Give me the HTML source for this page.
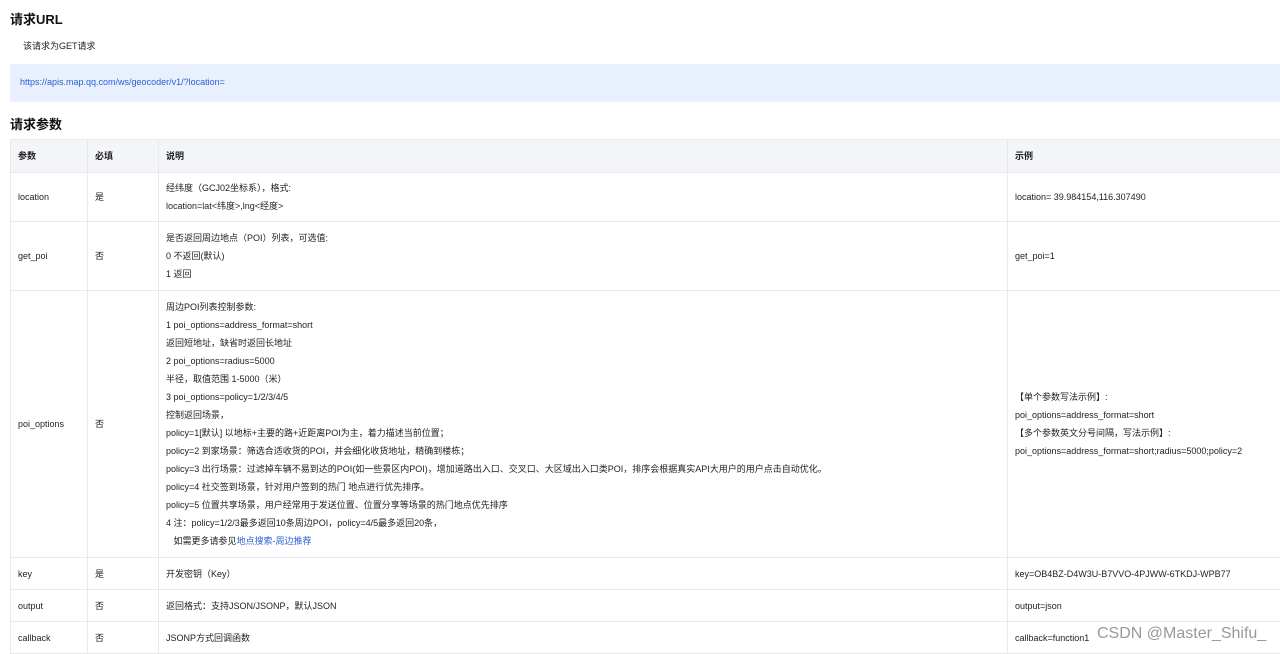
<!DOCTYPE html>
<html><head><meta charset="utf-8"><style>
*{margin:0;padding:0;box-sizing:border-box}
body{width:1280px;height:653px;overflow:hidden;background:#fff;font-family:"Liberation Sans","Noto Sans CJK SC",sans-serif;color:#222;font-size:9px;position:relative}
.h{position:absolute;left:10px;font-size:13px;font-weight:bold;color:#111}
.p{position:absolute;left:23px;top:39px;font-size:9px}
.box{position:absolute;left:10px;top:64px;width:1270px;height:38px;background:#e9f0fd}
.box a{position:absolute;left:10px;top:13px;color:#2a5fd6;text-decoration:none;font-size:9px}
table{position:absolute;left:10px;top:139px;width:1290px;border-collapse:collapse;table-layout:fixed}
td,th{border:1px solid #e6e9ef;padding:0 0 0 7px;text-align:left;vertical-align:middle;font-size:9px;line-height:18px;font-weight:normal}
th{background:#f3f5f9;font-weight:bold;height:33px}
a.l{color:#2a5fd6;text-decoration:none}
.wm{position:absolute;left:1097px;top:625px;font-size:16px;color:#999}
</style></head><body>
<div class="h" style="top:9px">请求URL</div>
<div class="p">该请求为GET请求</div>
<div class="box"><a>https://apis.map.qq.com/ws/geocoder/v1/?location=</a></div>
<div class="h" style="top:114px">请求参数</div>
<table>
<colgroup><col style="width:77px"><col style="width:71px"><col style="width:849px"><col style="width:293px"></colgroup>
<tr><th>参数</th><th>必填</th><th>说明</th><th>示例</th></tr>
<tr style="height:49px"><td>location</td><td>是</td><td>经纬度（GCJ02坐标系），格式:<br>location=lat&lt;纬度&gt;,lng&lt;经度&gt;</td><td>location= 39.984154,116.307490</td></tr>
<tr style="height:69px"><td>get_poi</td><td>否</td><td>是否返回周边地点（POI）列表，可选值:<br>0 不返回(默认)<br>1 返回</td><td>get_poi=1</td></tr>
<tr style="height:267px"><td>poi_options</td><td>否</td><td>周边POI列表控制参数:<br>1 poi_options=address_format=short<br>返回短地址，缺省时返回长地址<br>2 poi_options=radius=5000<br>半径，取值范围 1-5000（米）<br>3 poi_options=policy=1/2/3/4/5<br>控制返回场景，<br>policy=1[默认] 以地标+主要的路+近距离POI为主，着力描述当前位置；<br>policy=2 到家场景：筛选合适收货的POI，并会细化收货地址，精确到楼栋；<br>policy=3 出行场景：过滤掉车辆不易到达的POI(如一些景区内POI)，增加道路出入口、交叉口、大区域出入口类POI，排序会根据真实API大用户的用户点击自动优化。<br>policy=4 社交签到场景，针对用户签到的热门 地点进行优先排序。<br>policy=5 位置共享场景，用户经常用于发送位置、位置分享等场景的热门地点优先排序<br>4 注：policy=1/2/3最多返回10条周边POI，policy=4/5最多返回20条，<br>&nbsp;&nbsp;&nbsp;如需更多请参见<a class="l">地点搜索-周边推荐</a></td><td>【单个参数写法示例】:<br>poi_options=address_format=short<br>【多个参数英文分号间隔，写法示例】:<br>poi_options=address_format=short;radius=5000;policy=2</td></tr>
<tr style="height:32px"><td>key</td><td>是</td><td>开发密钥（Key）</td><td>key=OB4BZ-D4W3U-B7VVO-4PJWW-6TKDJ-WPB77</td></tr>
<tr style="height:32px"><td>output</td><td>否</td><td>返回格式：支持JSON/JSONP，默认JSON</td><td>output=json</td></tr>
<tr style="height:32px"><td>callback</td><td>否</td><td>JSONP方式回调函数</td><td>callback=function1</td></tr>
</table>
<div class="wm">CSDN @Master_Shifu_</div>
</body></html>
